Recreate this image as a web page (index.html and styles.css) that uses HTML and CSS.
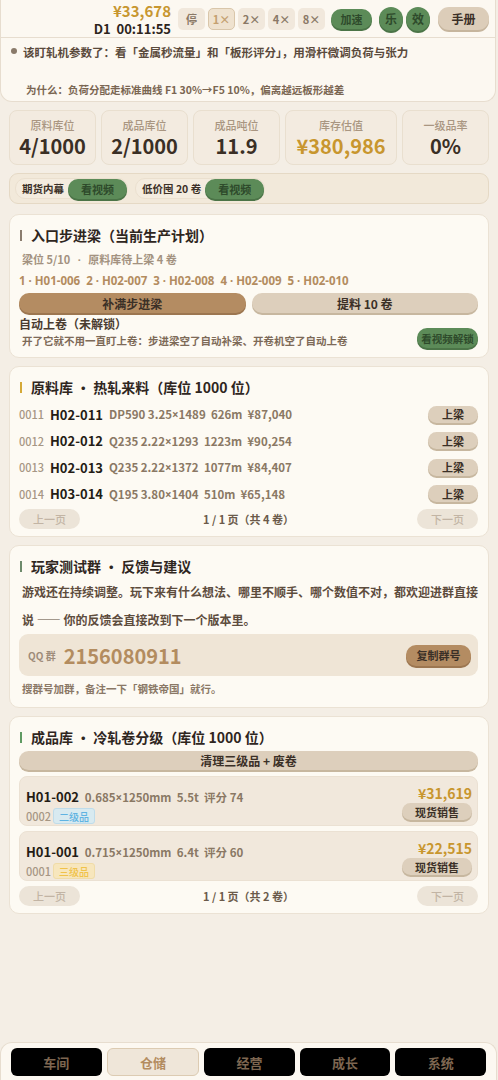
FILE: index.html
```html
<!DOCTYPE html>
<html lang="zh-CN">
<head>
    <meta charset="UTF-8">
    <meta name="viewport" content="width=device-width, initial-scale=1.0">
    <title>钢铁帝国 · 仓储</title>
    <link rel="stylesheet" href="styles.css">
</head>
<body>

<div class="header">
    <div class="topbar">
        <div class="clock">
            <div class="money">¥33,678</div>
            <div class="time">D1&nbsp;&nbsp;00:11:55</div>
        </div>
        <button class="speed">停</button>
        <button class="speed active">1×</button>
        <button class="speed">2×</button>
        <button class="speed">4×</button>
        <button class="speed">8×</button>
        <button class="green pill boost">加速</button>
        <div class="toggles">
            <button class="green round">乐</button>
            <button class="green round">效</button>
        </div>
        <button class="manual">手册</button>
    </div>
    <div class="tip">
        <p class="tip-main">该盯轧机参数了：看「金属秒流量」和「板形评分」，用滑杆微调负荷与张力</p>
        <p class="tip-why">为什么：负荷分配走标准曲线 F1 30%→F5 10%，偏离越远板形越差</p>
    </div>
</div>

<div class="page">
    <div class="stats">
        <div class="stat"><div class="stat-label">原料库位</div><div class="stat-value">4/1000</div></div>
        <div class="stat"><div class="stat-label">成品库位</div><div class="stat-value">2/1000</div></div>
        <div class="stat"><div class="stat-label">成品吨位</div><div class="stat-value">11.9</div></div>
        <div class="stat wide"><div class="stat-label">库存估值</div><div class="stat-value gold">¥380,986</div></div>
        <div class="stat"><div class="stat-label">一级品率</div><div class="stat-value">0%</div></div>
    </div>

    <div class="ads">
        <div class="ad-chip">期货内幕 <button class="green pill">看视频</button></div>
        <div class="ad-chip">低价囤 20 卷 <button class="green pill">看视频</button></div>
    </div>

    <div class="card">
        <h2 class="card-title mark-gray">入口步进梁（当前生产计划）</h2>
        <div class="meta">梁位 5/10 &nbsp;&nbsp;<span class="lat">·</span>&nbsp;&nbsp; 原料库待上梁 4 卷</div>
        <div class="chain lat">1 · H01-006&nbsp; 2 · H02-007&nbsp; 3 · H02-008&nbsp; 4 · H02-009&nbsp; 5 · H02-010</div>
        <div class="btn-row">
            <button class="btn brown">补满步进梁</button>
            <button class="btn tan">提料 10 卷</button>
        </div>
        <div class="auto">
            <div>
                <div class="auto-title">自动上卷（未解锁）</div>
                <div class="auto-desc">开了它就不用一直盯上卷：步进梁空了自动补梁、开卷机空了自动上卷</div>
            </div>
            <button class="green pill unlock">看视频解锁</button>
        </div>
    </div>

    <div class="card">
        <h2 class="card-title mark-gold">原料库 · 热轧来料（库位 1000 位）</h2>
        <div class="coil-list"></div>
        <div class="pager">
            <button class="pager-btn">上一页</button>
            <span>1 / 1 页（共 4 卷）</span>
            <button class="pager-btn">下一页</button>
        </div>
    </div>

    <div class="card">
        <h2 class="card-title mark-sage">玩家测试群 · 反馈与建议</h2>
        <p class="feedback">游戏还在持续调整。玩下来有什么想法、哪里不顺手、哪个数值不对，都欢迎进群直接说 —— 你的反馈会直接改到下一个版本里。</p>
        <div class="qq">
            <span class="qq-label">QQ 群</span>
            <span class="qq-num">2156080911</span>
            <button class="btn brown copy">复制群号</button>
        </div>
        <div class="note">搜群号加群，备注一下「钢铁帝国」就行。</div>
    </div>

    <div class="card">
        <h2 class="card-title mark-green">成品库 · 冷轧卷分级（库位 1000 位）</h2>
        <button class="btn tan clear">清理三级品 + 废卷</button>
        <div class="product-list"></div>
        <div class="pager">
            <button class="pager-btn">上一页</button>
            <span>1 / 1 页（共 2 卷）</span>
            <button class="pager-btn">下一页</button>
        </div>
    </div>
</div>

<nav class="tabs">
    <button class="tab">车间</button>
    <button class="tab active">仓储</button>
    <button class="tab">经营</button>
    <button class="tab">成长</button>
    <button class="tab">系统</button>
</nav>

<script>
    const coils = [
        { slot: '0011', id: 'H02-011', spec: 'DP590 3.25×1489&nbsp; 626m&nbsp; ¥87,040' },
        { slot: '0012', id: 'H02-012', spec: 'Q235 2.22×1293&nbsp; 1223m&nbsp; ¥90,254' },
        { slot: '0013', id: 'H02-013', spec: 'Q235 2.22×1372&nbsp; 1077m&nbsp; ¥84,407' },
        { slot: '0014', id: 'H03-014', spec: 'Q195 3.80×1404&nbsp; 510m&nbsp; ¥65,148' }
    ];
    const products = [
        { id: 'H01-002', spec: '0.685×1250mm&nbsp; 5.5t&nbsp; 评分 74', slot: '0002', grade: '二级品', cls: 'g2', price: '¥31,619' },
        { id: 'H01-001', spec: '0.715×1250mm&nbsp; 6.4t&nbsp; 评分 60', slot: '0001', grade: '三级品', cls: 'g3', price: '¥22,515' }
    ];

    // the CJK font draws × full width, so use the latin one
    const narrow = s => s.replace('×', '<span class="lat">×</span>');

    document.querySelector('.coil-list').innerHTML = coils.map(c => `
        <div class="coil">
            <span class="slot">${c.slot}</span>
            <span class="coil-id">${c.id}</span>
            <span class="spec">${narrow(c.spec)}</span>
            <button class="btn tan load">上梁</button>
        </div>`).join('');

    document.querySelector('.product-list').innerHTML = products.map(p => `
        <div class="product">
            <div class="product-info">
                <div><span class="coil-id">${p.id}</span> <span class="spec">${narrow(p.spec)}</span></div>
                <div class="product-sub"><span class="slot">${p.slot}</span><span class="grade ${p.cls}">${p.grade}</span></div>
            </div>
            <div class="product-side">
                <div class="price">${p.price}</div>
                <button class="btn tan sell">现货销售</button>
            </div>
        </div>`).join('');
</script>

</body>
</html>
```

FILE: styles.css
```css
* {
    box-sizing: border-box;
}
body {
    margin: 0;
    background-color: #f4eee5;
    font-family: "Noto Sans CJK SC", "Noto Sans", sans-serif;
    color: #3b3027;
    font-weight: 700;
}
button {
    font-family: inherit;
    font-weight: 700;
    border: none;
    cursor: pointer;
    padding: 0;
}
p {
    margin: 0;
}
.lat {
    font-family: "Noto Sans", "Noto Sans CJK SC", sans-serif;
}

/* header */
.header {
    width: 496px;
    background-color: #fcf8f1;
    border: 1px solid #e7ddcf;
    border-top: none;
    border-radius: 0 0 12px 12px;
}
.topbar {
    display: flex;
    align-items: center;
    justify-content: flex-end;
    height: 38px;
    padding: 0 6px 0 0;
    gap: 3px;
    border-bottom: 1px solid #e7ddcf;
}
.clock {
    text-align: right;
    margin-right: 4px;
    line-height: 1;
}
.money {
    color: #c7962f;
    font-size: 15px;
    margin-bottom: 4px;
}
.time {
    font-size: 13px;
    color: #2d241c;
}
.speed {
    width: 27px;
    height: 22px;
    border-radius: 5px;
    background-color: #f1e8dc;
    color: #8a7866;
    font-size: 11px;
    border: 1px solid transparent;
}
.speed.active {
    background-color: #efe2cf;
    border-color: #d9c6aa;
    color: #c4a070;
}
.green {
    background-color: #5c8b58;
    color: #2e4a2b;
    font-size: 11px;
    box-shadow: 0 2px 0 #4b7447;
}
.pill {
    border-radius: 11px;
    height: 20px;
    padding: 0 8px;
}
.boost {
    margin-left: 3px;
    margin-right: 4px;
    width: 41px;
    padding: 0;
}
.toggles {
    display: flex;
    gap: 3px;
}
.round {
    width: 24px;
    height: 24px;
    border-radius: 12px;
    font-size: 12px;
}
.manual {
    margin-left: 5px;
    width: 51px;
    height: 23px;
    border-radius: 11px;
    background-color: #dccdb9;
    color: #3b3027;
    font-size: 12px;
    box-shadow: 0 2px 0 #c6b59d;
}
.tip {
    padding: 6px 10px 6px 10px;
    height: 63px;
}
.tip-main {
    font-size: 11.5px;
    color: #5a4a3c;
    line-height: 16px;
    padding-left: 12px;
    position: relative;
}
.tip-main::before {
    content: "";
    position: absolute;
    left: 0;
    top: 4px;
    width: 6px;
    height: 6px;
    border-radius: 50%;
    background-color: #8a7a6a;
}
.tip-why {
    margin-top: 22px;
    padding-left: 15px;
    font-size: 10.5px;
    color: #7a6652;
    line-height: 16px;
}

/* page */
.page {
    padding: 8px 9px 120px 9px;
}
.stats {
    display: flex;
    gap: 5px;
}
.stat {
    flex: 1 1 84px;
    height: 55px;
    background-color: #f3ebe0;
    border: 1px solid #e9dfcf;
    border-radius: 8px;
    text-align: center;
    padding-top: 6px;
}
.stat.wide {
    flex-basis: 112px;
    flex-grow: 0;
}
.stat-label {
    font-size: 11px;
    color: #a99681;
    line-height: 16px;
    font-weight: 500;
}
.stat-value {
    font-size: 20px;
    line-height: 26px;
    color: #3a2f25;
}
.gold {
    color: #c8962e;
}
.ads {
    display: flex;
    gap: 7px;
    margin-top: 8px;
    padding: 4px 5px;
    height: 31px;
    background-color: #f2e9da;
    border: 1px solid #e5d9c5;
    border-radius: 9px;
}
.ad-chip {
    display: flex;
    align-items: center;
    gap: 4px;
    padding: 0 0 0 6px;
    border-radius: 10px;
    background-color: #f4ecdf;
    border: 1px solid #ebe0cf;
    font-size: 10.5px;
    color: #3b3027;
}
.ad-chip .pill {
    width: 59px;
    padding: 0;
}

/* cards */
.card {
    margin-top: 8px;
    background-color: #fdfaf3;
    border: 1px solid #ebe2d4;
    border-radius: 10px;
    padding: 10px 10px 7px 9px;
}
.ads + .card {
    margin-top: 10px;
}
.card-title {
    margin: 0 0 4px 0;
    font-size: 14px;
    line-height: 20px;
    padding-left: 12px;
    position: relative;
    color: #2f261e;
}
.card-title::before {
    content: "";
    position: absolute;
    left: 1px;
    top: 5px;
    width: 2px;
    height: 11px;
    background-color: #8a7c6e;
}
.mark-gold::before {
    background-color: #d5a937;
}
.mark-sage::before {
    background-color: #6d8a6b;
}
.mark-green::before {
    background-color: #5f9a62;
}
.meta {
    font-size: 11px;
    line-height: 21px;
    color: #a39280;
    padding-left: 3px;
}
.chain {
    font-size: 11.5px;
    line-height: 21px;
    color: #b38c5f;
}
.btn {
    border-radius: 10px;
    font-size: 12px;
    color: #3b3027;
}
.brown {
    background-color: #b48c62;
    box-shadow: 0 2px 0 #9c7650;
}
.tan {
    background-color: #ddcfbc;
    box-shadow: 0 2px 0 #c7b79f;
}
.btn-row {
    display: flex;
    gap: 6px;
    margin-top: 2px;
}
.btn-row .btn {
    flex: 1;
    height: 20px;
}
.auto {
    display: flex;
    align-items: flex-end;
    justify-content: space-between;
    margin-top: 2px;
}
.auto-title {
    font-size: 12px;
    line-height: 17px;
    color: #4a3c30;
}
.auto-desc {
    font-size: 10.5px;
    line-height: 18px;
    color: #7d6a58;
    padding-left: 3px;
}
.unlock {
    width: 61px;
    height: 20px;
    padding: 0;
    font-size: 10.5px;
    margin-bottom: 2px;
}

.coil {
    display: flex;
    align-items: center;
    height: 26.5px;
}
.slot {
    font-size: 11px;
    color: #a69684;
    width: 31px;
    font-weight: 500;
}
.coil-id {
    font-size: 13px;
    color: #241c15;
    margin-right: 6px;
}
.spec {
    font-size: 11.5px;
    color: #8a7864;
}
.load {
    margin-left: auto;
    width: 50px;
    height: 17px;
    border-radius: 9px;
    font-size: 11px;
}
.pager {
    display: flex;
    justify-content: space-between;
    align-items: center;
    margin-top: 2px;
    font-size: 11px;
    color: #6b5a4a;
}
.pager-btn {
    width: 61px;
    height: 20px;
    border-radius: 10px;
    background-color: #ece4d8;
    color: #c2b4a4;
    font-size: 11px;
    font-weight: 500;
}

.card-title + .feedback {
    margin-top: -2px;
}
.feedback {
    font-size: 12px;
    line-height: 28px;
    color: #5d4c3d;
    padding-left: 3px;
}
.qq {
    display: flex;
    align-items: center;
    height: 42px;
    padding: 0 7px 0 9px;
    background-color: #efe5d6;
    border-radius: 9px;
}
.qq-label {
    font-size: 10px;
    color: #9e8c7a;
    margin-right: 8px;
}
.qq-num {
    font-size: 20px;
    color: #b38c5f;
}
.copy {
    margin-left: auto;
    width: 65px;
    height: 21px;
    font-size: 11px;
}
.note {
    font-size: 10.5px;
    line-height: 22px;
    margin-top: 2px;
    color: #8a7866;
    padding-left: 3px;
}

.clear {
    display: block;
    width: 100%;
    height: 19px;
    margin: 1px 0 6px 0;
    font-size: 12px;
}
.product {
    display: flex;
    justify-content: space-between;
    height: 50px;
    margin-bottom: 5px;
    padding: 6px 5px 0 6px;
    background-color: #f1e8dc;
    border: 1px solid #ebe1d3;
    border-radius: 8px;
}
.product .coil-id {
    margin-right: 2px;
}
.product-sub {
    display: flex;
    align-items: center;
    margin-top: 1px;
}
.product-sub .slot {
    width: auto;
    margin-right: 2px;
}
.grade {
    font-size: 10px;
    padding: 0 5px;
    height: 16px;
    line-height: 16px;
    border-radius: 3px;
    font-weight: 500;
}
.g2 {
    background-color: #d8eaf0;
    color: #5fb3e2;
    border: 1px solid #bfdcea;
}
.g3 {
    background-color: #f7e6bd;
    color: #f0c24a;
    border: 1px solid #f0dca8;
}
.product-side {
    display: flex;
    flex-direction: column;
    align-items: flex-end;
}
.price {
    font-size: 14px;
    line-height: 20px;
    color: #c8962e;
}
.sell {
    width: 70px;
    height: 17px;
    border-radius: 9px;
    font-size: 11px;
}

/* bottom tabs */
.tabs {
    position: fixed;
    left: 0;
    right: 1px;
    bottom: 0;
    height: 38px;
    display: flex;
    gap: 5px;
    padding: 5px 10px 4px 10px;
    background-color: #fcf8f1;
    border: 1px solid #e7ddcf;
    border-bottom: none;
    border-radius: 12px 12px 0 0;
}
.tab {
    flex: 1;
    border-radius: 6px;
    background-color: #000;
    color: #7d6650;
    font-size: 13px;
}
.tab.active {
    background-color: #efe6d9;
    border: 1px solid #dccbb2;
    color: #b38c5f;
}
```
